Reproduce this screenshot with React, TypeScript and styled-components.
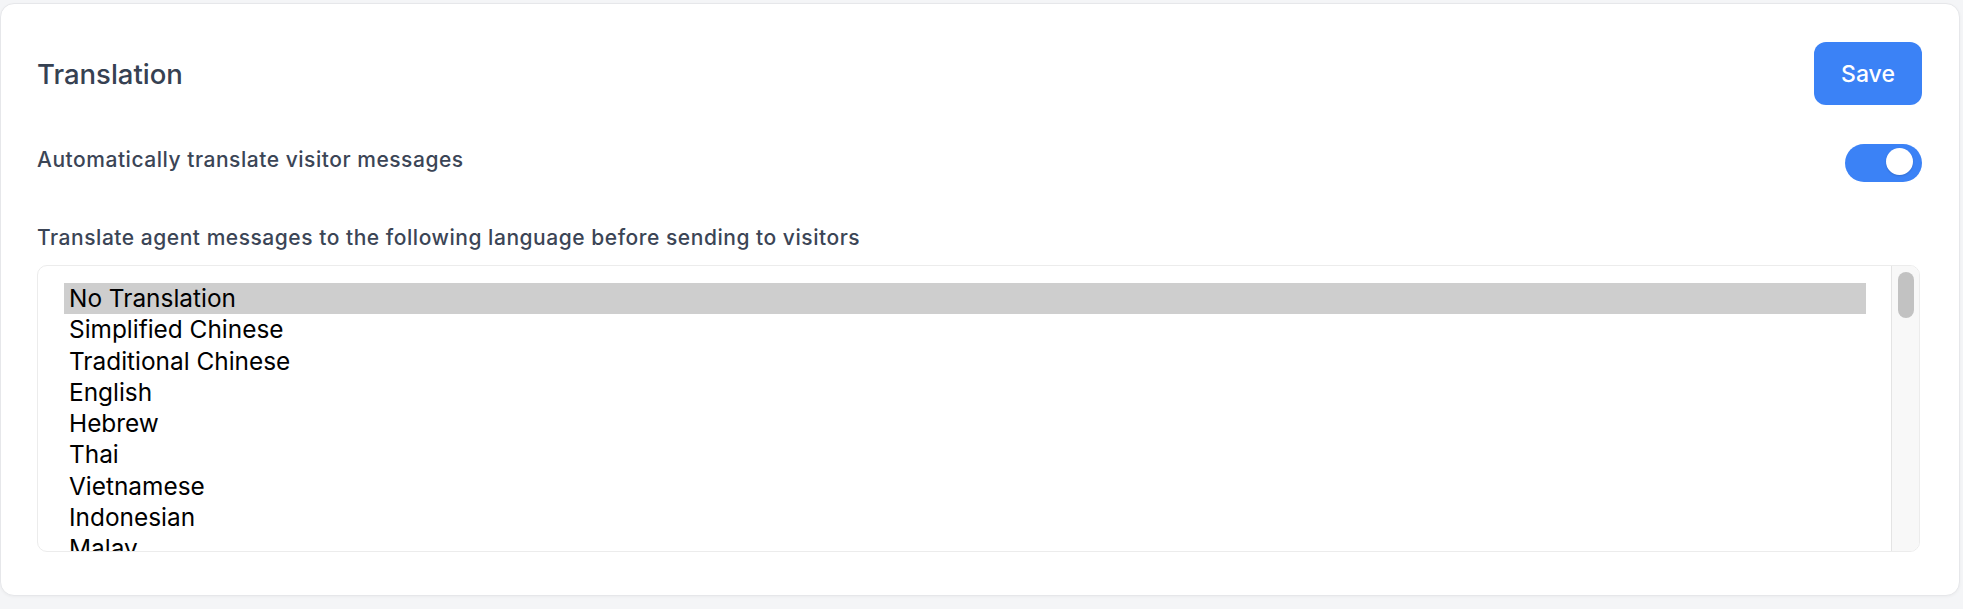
import React, { useState } from "react";
import styled, { createGlobalStyle } from "styled-components";

const GlobalStyle = createGlobalStyle`
  html, body {
    margin: 0;
    padding: 0;
    background: #f4f5f7;
  }
  * { box-sizing: border-box; }
`;

const Page = styled.div`
  padding: 3px 3px 13px 0;
  font-family: Inter, "Noto Sans", sans-serif;
`;

const Card = styled.section`
  width: 1960px;
  height: 593px;
  background: #ffffff;
  border: 1px solid #e6e7ea;
  border-radius: 14px;
  box-shadow: 0 1px 3px rgba(0, 0, 0, 0.04);
  padding: 38px 37px 0 36px;
  display: flex;
  flex-direction: column;
`;

const Header = styled.div`
  display: flex;
  align-items: center;
  justify-content: space-between;
  height: 63px;
`;

const Title = styled.h2`
  margin: 0;
  font-size: 27.5px;
  font-weight: 500;
  color: #364152;
  letter-spacing: 0;
`;

const SaveButton = styled.button`
  width: 108px;
  height: 63px;
  border: none;
  border-radius: 12px;
  background: #3b82f6;
  color: #ffffff;
  font-family: Inter, "Noto Sans", sans-serif;
  font-size: 23px;
  font-weight: 500;
  cursor: pointer;
`;

const ToggleRow = styled.div`
  display: flex;
  align-items: flex-start;
  justify-content: space-between;
  margin-top: 39px;
  height: 38px;
`;

const Label = styled.div<{ $offset?: number }>`
  font-size: 21px;
  font-weight: 500;
  letter-spacing: 0.53px;
  line-height: 30px;
  color: #3b4556;
  margin-top: ${(p) => p.$offset ?? 0}px;
`;

const Switch = styled.button<{ $on: boolean }>`
  position: relative;
  width: 77px;
  height: 38px;
  border: none;
  border-radius: 19px;
  background: ${(p) => (p.$on ? "#3b82f6" : "#d1d5db")};
  padding: 0;
  cursor: pointer;
`;

const Knob = styled.span<{ $on: boolean }>`
  position: absolute;
  top: 4px;
  left: ${(p) => (p.$on ? "41px" : "5px")};
  width: 27px;
  height: 27px;
  border-radius: 50%;
  background: #ffffff;
  box-shadow: 0 1px 2px rgba(0, 0, 0, 0.15);
`;

const ListLabel = styled(Label)`
  margin-top: 41px;
`;

const ListBox = styled.div`
  margin-top: 12px;
  margin-right: 2px;
  height: 287px;
  display: flex;
  border: 1px solid #ececec;
  border-radius: 10px;
  overflow: hidden;
  background: #ffffff;
`;

const Options = styled.div`
  flex: 1;
  padding: 17px 25px 0 26px;
  overflow: hidden;
`;

const Option = styled.div<{ $selected?: boolean }>`
  height: 31.3px;
  line-height: 30px;
  padding-left: 5px;
  font-family: Inter, "Noto Sans", sans-serif;
  font-size: 24.4px;
  color: #000000;
  white-space: nowrap;
  background: ${(p) => (p.$selected ? "#cecece" : "transparent")};
`;

const Track = styled.div`
  position: relative;
  width: 28px;
  background: #f8f8f8;
  border-left: 1px solid #e4e4e4;
`;

const Thumb = styled.div`
  position: absolute;
  top: 6px;
  left: 6px;
  width: 16px;
  height: 46px;
  border-radius: 8px;
  background: #c2c2c2;
`;

const languages = [
  "No Translation",
  "Simplified Chinese",
  "Traditional Chinese",
  "English",
  "Hebrew",
  "Thai",
  "Vietnamese",
  "Indonesian",
  "Malay",
  "Japanese",
  "Korean",
];

export default function App() {
  const [on, setOn] = useState(true);
  const [selected, setSelected] = useState(0);
  return (
    <Page>
      <GlobalStyle />
      <Card>
        <Header>
          <Title>Translation</Title>
          <SaveButton>Save</SaveButton>
        </Header>
        <ToggleRow>
          <Label $offset={1}>Automatically translate visitor messages</Label>
          <Switch $on={on} onClick={() => setOn(!on)} aria-pressed={on}>
            <Knob $on={on} />
          </Switch>
        </ToggleRow>
        <ListLabel>
          Translate agent messages to the following language before sending to visitors
        </ListLabel>
        <ListBox>
          <Options>
            {languages.map((l, i) => (
              <Option key={l} $selected={i === selected} onClick={() => setSelected(i)}>
                {l}
              </Option>
            ))}
          </Options>
          <Track>
            <Thumb />
          </Track>
        </ListBox>
      </Card>
    </Page>
  );
}
